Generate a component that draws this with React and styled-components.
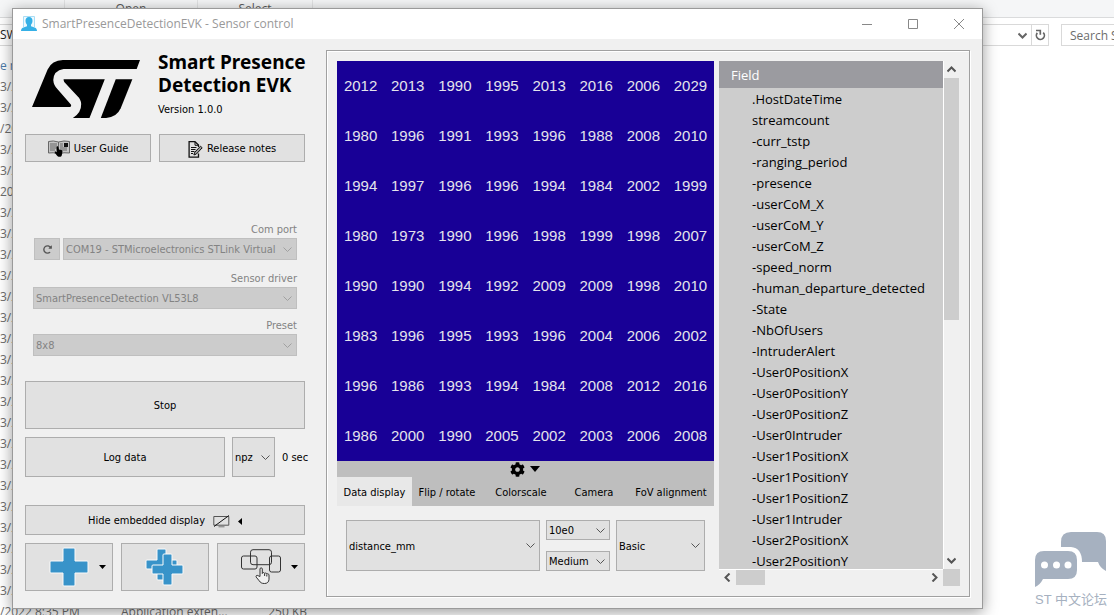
import styled, { createGlobalStyle } from "styled-components";
import { FaRedoAlt, FaCog } from "react-icons/fa";

const GlobalStyle = createGlobalStyle`
    * {
        box-sizing: border-box;
    }
    body {
        margin: 0;
        background: #fff;
        overflow: hidden;
    }
    button,
    select {
        font: inherit;
        color: inherit;
    }
`;

const uiFont = `"Open Sans", "Noto Sans", sans-serif`;
const dialogFont = `"DejaVu Sans Condensed", "Open Sans", sans-serif`;

/* ---------- desktop behind the window ---------- */

const Desktop = styled.div`
    position: relative;
    height: 100vh;
    overflow: hidden;
    display: flex;
    flex-direction: column;
    background: #fff;
    font: 12px/21px ${uiFont};
    color: #6d6d6d;
`;

const Ribbon = styled.div`
    display: grid;
    grid-template-columns: 65px 133px 115px 1fr;
    flex: none;
    height: 18px;
    background: #f5f6f7;
    border-bottom: 1px solid #dadbdc;
`;

const RibbonGroup = styled.div`
    border-right: 1px solid #e2e3e4;
    text-align: center;
    line-height: 18px;
    color: #5a5a5a;
`;

const AddressRow = styled.div`
    display: flex;
    flex: none;
    gap: 12px;
    height: 32px;
    padding: 6px 0 4px;
`;

const AddressBar = styled.div`
    flex: 1;
    display: flex;
    border: 1px solid #d9d9d9;
    border-left: none;
    color: #222;
    line-height: 20px;
`;

const AddressPath = styled.span`
    flex: 1;
`;

const AddressButton = styled.button`
    display: flex;
    align-items: center;
    justify-content: center;
    width: ${(p) => p.$width}px;
    padding: 0;
    border: none;
    border-left: ${(p) => (p.$divided ? "1px solid #d9d9d9" : "none")};
    background: none;
`;

const SearchBox = styled.input`
    width: 53px;
    padding: 0 0 0 8px;
    border: 1px solid #d9d9d9;
    border-right: none;
    font: inherit;
    &::placeholder {
        color: #6d6d6d;
        opacity: 1;
    }
`;

const FileList = styled.div`
    padding-top: 5px;
`;

const FileRow = styled.div`
    display: grid;
    grid-template-columns: 121px 130px 56px;
    height: 21px;
    white-space: nowrap;
    color: ${(p) => (p.$head ? "#4c7ba8" : "#6d6d6d")};
`;

const FileSize = styled.span`
    text-align: right;
`;

const ForumMark = styled.div`
    position: absolute;
    right: 7px;
    bottom: 4px;
    display: flex;
    flex-direction: column;
    align-items: center;
    font: 13px/23px "Liberation Sans", "Noto Sans CJK SC", sans-serif;
    color: #a6b1c0;
`;

/* ---------- window ---------- */

const Window = styled.div`
    position: absolute;
    inset: 8px 131px 6px 12px;
    display: flex;
    flex-direction: column;
    border: 1px solid #9a9a9a;
    background: #f0f0f0;
    box-shadow: 0 3px 14px rgba(0, 0, 0, 0.4);
    font: 11px/16px ${dialogFont};
    color: #000;
`;

const TitleBar = styled.header`
    display: flex;
    align-items: center;
    flex: none;
    height: 30px;
    padding-left: 8px;
    gap: 5px;
    background: #fff;
    color: #999;
    font-family: ${uiFont};
    font-size: 12px;
`;

const WindowTitle = styled.span`
    flex: 1;
`;

const Caption = styled.div`
    display: flex;
`;

const CaptionButton = styled.button`
    display: flex;
    align-items: center;
    justify-content: center;
    width: 46px;
    height: 30px;
    padding: 0;
    border: none;
    background: none;
`;

const Body = styled.div`
    display: flex;
    flex: 1;
    min-height: 0;
    gap: 21px;
    padding: 11px 12px 11px 12px;
`;

const Sidebar = styled.aside`
    flex: none;
    width: 280px;
    display: flex;
    flex-direction: column;
`;

const Brand = styled.div`
    display: flex;
    gap: 18px;
    height: 84px;
    padding: 0 0 0 7px;
    svg {
        flex: none;
        margin-top: 10px;
    }
`;

const BrandName = styled.h1`
    margin: 0;
    padding-top: 1px;
    font: bold 19px/23px "Noto Sans", sans-serif;
    white-space: nowrap;
`;

const Version = styled.div`
    padding-top: 5px;
    line-height: 16px;
`;

const Button = styled.button`
    display: flex;
    align-items: center;
    justify-content: center;
    gap: ${(p) => p.$gap || 4}px;
    flex: ${(p) => p.$flex || "none"};
    height: ${(p) => p.$height}px;
    padding: 2px 0 0;
    border: 1px solid #adadad;
    background: #e1e1e1;
    &:disabled {
        width: 26px;
        border-color: #bfbfbf;
        background: #ccc;
        color: #555;
    }
`;

const IconButton = styled(Button)`
    padding: 0;
`;

const MenuButton = styled(IconButton)`
    display: grid;
    grid-template-columns: 1fr 40px 1fr;
    justify-items: center;
    svg:first-child {
        grid-column: 2;
    }
`;

const ButtonRow = styled.div`
    display: flex;
    gap: ${(p) => p.$gap || 8}px;
`;

const Settings = styled.div`
    display: flex;
    flex-direction: column;
    padding: 59px 8px 25px 8px;
    color: #838383;
`;

const Setting = styled.div`
    display: flex;
    flex-direction: column;
    height: ${(p) => p.$height}px;
`;

const SettingLabel = styled.label`
    text-align: right;
    height: 17px;
    line-height: 18px;
`;

const SettingRow = styled.div`
    display: flex;
    gap: 3px;
    padding-left: 1px;
`;

const SelectBox = styled.div`
    display: grid;
    align-items: center;
    flex: ${(p) => p.$flex || "none"};
    width: ${(p) => (p.$width ? p.$width + "px" : "auto")};
    min-width: 0;
    height: ${(p) => p.$height}px;
    border: 1px solid ${(p) => (p.$disabled ? "#bfbfbf" : "#adadad")};
    background: ${(p) => (p.$disabled ? "#ccc" : "#e1e1e1")};
    select,
    svg {
        grid-area: 1 / 1;
    }
    svg {
        justify-self: end;
        margin-right: 4px;
        pointer-events: none;
    }
`;

const Select = styled.select`
    appearance: none;
    width: 100%;
    height: 100%;
    padding: 2px 18px 0 2px;
    border: none;
    background: none;
    &:disabled {
        color: #838383;
        opacity: 1;
    }
`;

const Stack = styled.div`
    display: flex;
    flex-direction: column;
    gap: 8px;
`;

const LogTime = styled.span`
    align-self: center;
    flex: none;
    width: 23px;
    padding-top: 2px;
    white-space: nowrap;
`;

const Tools = styled(Stack)`
    padding-top: 28px;
`;

/* ---------- data panel ---------- */

const Panel = styled.main`
    flex: 1;
    min-width: 0;
    display: flex;
    gap: 5px;
    padding: 10px 9px 10px 10px;
    border: 1px solid #a0a0a0;
    box-shadow: inset 1px 1px #fff, 1px 1px #fff;
`;

const Display = styled.section`
    flex: 1;
    min-width: 0;
    display: flex;
    flex-direction: column;
`;

const HeatMap = styled.div`
    display: grid;
    grid-template-columns: repeat(8, 1fr);
    grid-auto-rows: 50px;
    background: #180096;
    color: #e4e4ec;
    font: 15px/50px "Liberation Sans", sans-serif;
    text-align: center;
`;

const GearBar = styled.button`
    display: flex;
    align-items: center;
    justify-content: center;
    gap: 5px;
    height: 16px;
    padding: 0 2px 0 0;
    border: none;
    background: #bebebe;
`;

const Tabs = styled.div`
    display: grid;
    grid-template-columns: 75fr 70fr 78fr 68fr 86fr;
    height: 29px;
    background: #bebebe;
`;

const Tab = styled.button`
    padding: 2px 0 0;
    border: none;
    white-space: nowrap;
    background: ${(p) => (p.$active ? "#e8e8e8" : "none")};
`;

const DisplayOptions = styled.div`
    display: flex;
    gap: 6px;
    padding: 14px 9px;
`;

const ScaleStack = styled.div`
    display: flex;
    flex-direction: column;
    gap: 11px;
`;

const FieldPane = styled.section`
    flex: none;
    width: 241px;
    display: grid;
    grid-template-columns: 1fr 17px;
    grid-template-rows: minmax(0, 1fr) 17px;
`;

const FieldScroll = styled.div`
    overflow: hidden;
    background: #cdcdcd;
`;

const FieldTable = styled.table`
    width: 100%;
    border-collapse: collapse;
    font-family: ${uiFont};
    font-size: 13px;
    th {
        height: 27px;
        padding: 0 0 0 12px;
        text-align: left;
        font-weight: normal;
        color: #fff;
        background: #9b9ba0;
    }
    td {
        height: 21px;
        padding: 2px 0 0 33px;
        line-height: 19px;
        white-space: nowrap;
    }
`;

const ScrollBar = styled.div`
    display: flex;
    flex-direction: ${(p) => (p.$vertical ? "column" : "row")};
    align-items: flex-start;
    border: 0 solid #fff;
    border-width: ${(p) => (p.$vertical ? "0 0 0 1px" : "1px 0 0")};
`;

const ScrollArrow = styled.button`
    display: flex;
    align-items: center;
    justify-content: center;
    width: ${(p) => (p.$vertical ? 15 : 17)}px;
    height: ${(p) => (p.$vertical ? 17 : 15)}px;
    padding: 0;
    border: none;
    background: none;
`;

const Thumb = styled.div`
    width: ${(p) => p.$width}px;
    height: ${(p) => p.$height}px;
    background: #cdcdcd;
`;

const Spacer = styled.div`
    flex: 1;
`;

const Corner = styled.div`
    background: #cdcdcd;
`;

/* ---------- drawings ---------- */

function StLogo() {
    return (
        <svg width="108" height="58" viewBox="95 180 325 174" aria-label="ST">
            <path d="M420 180 410 207H190Q160 212 159 240 160 256 172 268L212 314Q215 319 210 321H95L142 208Q155 181 188 180Z" />
            <path d="M190 238H314L268 354H218Q244 338 243 312 242 298 232 289L192 246Q190 242 190 238Z" />
            <path d="M347 238H397L362 325Q350 352 318 354H302Z" />
        </svg>
    );
}

function AppIcon() {
    return (
        <svg width="16" height="16" viewBox="0 0 16 16">
            <path d="M2.500 11V.5h11V11" fill="#eef9fe" stroke="#a8ddf5" />
            <path d="M8 1c2.600 0 3.600 1.700 3.500 4-.1 1.700-.8 2.900-1.500 3.700v1.600l4.300 1.500c1 .5 1.700 1.700 1.700 3.200H0c0-1.500.7-2.700 1.700-3.200L6 10.300V8.700C5.300 7.900 4.600 6.700 4.500 5 4.400 2.700 5.400 1 8 1Z" fill="#35b0e6" />
        </svg>
    );
}

function GuideIcon() {
    return (
        <svg width="22" height="18" viewBox="0 0 22 18">
            <path d="M.5 1.500Q5 .2 10.500 2 16 .2 21.500 1.500V13Q16 12 10.500 14 5 12 .5 13Z" fill="#c4c4c4" stroke="#666" />
            <path d="M10.500 2v11M2 4h7M2 6h7M2 8h6M2 10h5M12 4h3M12 6h3M12 8h7M12 10h7" stroke="#666" />
            <path d="M16 3h4v4h-4z" fill="#111" />
            <path d="M9 6.500c.8-.4 1.300 0 1.400.8l.5 2.200 2.400.6c1 .3 1.300 1 1.100 1.900l-.6 3.300c-.3 1-1 1.500-2.200 1.500-1.400 0-2-.5-2.700-1.400L6.700 12.500c-.3-.9.4-1.300 1.100-.9l1 .6-.4-4.500c-.1-.5.1-1 .6-1.200Z" />
        </svg>
    );
}

function NotesIcon() {
    return (
        <svg width="15" height="17" viewBox="0 0 15 17" fill="none" stroke="#111">
            <path d="M10.500 6V4L7 .7H1.100v15.400h9.400V12.500" strokeWidth="1.300" />
            <path d="M7 1v3.300h3.500M3 6.500h5.500M3 8.500h4.500M3 10.500h3.500M3 12.500h2" />
            <path d="M12.500 5.200l1.700 1.600-5.800 6.200-2.500 1 .8-2.700Z" fill="#999" />
        </svg>
    );
}

function MonitorIcon() {
    return (
        <svg width="17" height="13" viewBox="0 0 17 13" fill="none" stroke="#555">
            <path d="M.8 1.500h15v8.700h-15z" />
            <path d="M5.500 11.800h6" stroke="#777" />
            <path d="M1 11.500 16 .5" stroke="#111" />
        </svg>
    );
}

function PlusIcon() {
    return (
        <svg width="40" height="40" viewBox="0 0 40 40">
            <path d="M15 1h10q1 0 1 1v12h12q1 0 1 1v10q0 1-1 1H26v12q0 1-1 1H15q-1 0-1-1V26H2q-1 0-1-1V15q0-1 1-1h12V2q0-1 1-1Z" fill="#3893c9" stroke="#fafafa" />
        </svg>
    );
}

function MultiPlusIcon() {
    const cross = "M13 1h7q1 0 1 1v10h10q1 0 1 1v7q0 1-1 1H21v10q0 1-1 1h-7q-1 0-1-1V21H2q-1 0-1-1v-7q0-1 1-1h10V2q0-1 1-1Z";
    return (
        <svg width="40" height="40" viewBox="0 0 40 40" fill="#3893c9" stroke="#fafafa">
            <path d={cross} transform="translate(0 1)" />
            <path d={cross} transform="translate(6 6)" />
        </svg>
    );
}

function LayoutIcon() {
    return (
        <svg width="40" height="36" viewBox="0 0 40 36" fill="none" stroke="#333">
            <rect x="9.500" y=".7" width="21" height="15" rx="2.500" />
            <rect x=".5" y="7" width="15.500" height="13" rx="2" />
            <rect x="28.500" y="7" width="11" height="16" rx="2" />
            <path d="M19 27.500V20c0-1.600 2.200-1.600 2.300 0v4.500c.2-1.400 2.200-1.200 2.300.1 .4-1 2.100-.8 2.200.5 .6-.7 2.100-.3 2.200.9v4.300c-.1 2.700-1.800 4.200-4.500 4.200-3 0-4-.9-5.300-2.700l-3-3.700c-.8-1.400.8-2.300 1.900-1.400Z" fill="#f0f0f0" />
            <path d="M23.600 25v2M25.800 25.500v2" />
        </svg>
    );
}

function Triangle({ left, width = 7, height = 4 }) {
    return left ? (
        <svg width="4" height="7" viewBox="0 0 4 7">
            <path d="M4 0v7L0 3.500Z" />
        </svg>
    ) : (
        <svg width={width} height={height} viewBox="0 0 8 4" preserveAspectRatio="none">
            <path d="M0 0h8L4 4Z" />
        </svg>
    );
}

function Chevron({ color = "#555", weight = 1, rotate = 0, size = 9 }) {
    return (
        <svg width={size} height={size} viewBox="0 0 9 9" fill="none" stroke={color} strokeWidth={weight}>
            <path d="M.5 2.500l4 4 4-4" transform={`rotate(${rotate} 4.500 4.500)`} />
        </svg>
    );
}

function Dropdown({ label, id, value, disabled, ...box }) {
    return (
        <SelectBox $disabled={disabled} {...box}>
            <Select id={id} aria-label={label} disabled={disabled} defaultValue={value}>
                <option>{value}</option>
            </Select>
            <Chevron color={disabled ? "#a0a0a0" : "#555"} />
        </SelectBox>
    );
}

/* ---------- data ---------- */

const distances = [
    2012, 2013, 1990, 1995, 2013, 2016, 2006, 2029,
    1980, 1996, 1991, 1993, 1996, 1988, 2008, 2010,
    1994, 1997, 1996, 1996, 1994, 1984, 2002, 1999,
    1980, 1973, 1990, 1996, 1998, 1999, 1998, 2007,
    1990, 1990, 1994, 1992, 2009, 2009, 1998, 2010,
    1983, 1996, 1995, 1993, 1996, 2004, 2006, 2002,
    1996, 1986, 1993, 1994, 1984, 2008, 2012, 2016,
    1986, 2000, 1990, 2005, 2002, 2003, 2006, 2008,
];

const fields = [
    ".HostDateTime",
    "streamcount",
    "-curr_tstp",
    "-ranging_period",
    "-presence",
    "-userCoM_X",
    "-userCoM_Y",
    "-userCoM_Z",
    "-speed_norm",
    "-human_departure_detected",
    "-State",
    "-NbOfUsers",
    "-IntruderAlert",
    "-User0PositionX",
    "-User0PositionY",
    "-User0PositionZ",
    "-User0Intruder",
    "-User1PositionX",
    "-User1PositionY",
    "-User1PositionZ",
    "-User1Intruder",
    "-User2PositionX",
    "-User2PositionY",
];

const tabs = ["Data display", "Flip / rotate", "Colorscale", "Camera", "FoV alignment"];

const fileDates = Array.from({ length: 25 }, (_, i) => (i === 2 ? "/20" : i === 5 ? "202" : "3/2"));

function Explorer() {
    return (
        <>
            <Ribbon>
                <RibbonGroup />
                <RibbonGroup>Open</RibbonGroup>
                <RibbonGroup>Select</RibbonGroup>
            </Ribbon>
            <AddressRow>
                <AddressBar>
                    <AddressPath>SW</AddressPath>
                    <AddressButton $width={17} aria-label="Previous locations">
                        <Chevron color="#666" weight={2} />
                    </AddressButton>
                    <AddressButton $width={17} $divided aria-label="Refresh">
                        <svg width="11" height="12" viewBox="0 0 11 12" fill="none" stroke="#666" strokeWidth="1.700">
                            <path d="M8.200 3.600A4 4 0 1 1 2.300 3.900" />
                            <path d="M1 1.500h4.300v4.200" />
                        </svg>
                    </AddressButton>
                </AddressBar>
                <SearchBox placeholder="Search S" aria-label="Search" />
            </AddressRow>
            <FileList>
                <FileRow $head>e m</FileRow>
                {fileDates.map((date, i) => (
                    <FileRow key={i}>{date}</FileRow>
                ))}
                <FileRow>
                    <span>/2022 8:35 PM</span>
                    <span>Application exten...</span>
                    <FileSize>250 KB</FileSize>
                </FileRow>
            </FileList>
            <ForumMark>
                <svg width="72" height="56" viewBox="0 0 72 56" fill="#a6b1c0">
                    <path d="M26 15V10Q26 0 36 0H62Q71 0 71 9V39Q65 36 63 30H47Q47 16 36 15Z" />
                    <path d="M9 19H33Q42 19 42 28V38Q42 47 33 47H8Q5 53 0 55V28Q0 19 9 19Z" />
                    <g fill="#fff">
                        <circle cx="9.500" cy="33" r="3.500" />
                        <circle cx="21.500" cy="33" r="3.500" />
                        <circle cx="33" cy="33" r="3.500" />
                    </g>
                </svg>
                <span>ST 中文论坛</span>
            </ForumMark>
        </>
    );
}

function Controls() {
    return (
        <Sidebar>
            <Brand>
                <StLogo />
                <div>
                    <BrandName>
                        Smart Presence
                        <br />
                        Detection EVK
                    </BrandName>
                    <Version>Version 1.0.0</Version>
                </div>
            </Brand>
            <ButtonRow>
                <Button $height={28} $flex="126">
                    <GuideIcon />
                    User Guide
                </Button>
                <Button $height={28} $flex="146">
                    <NotesIcon />
                    Release notes
                </Button>
            </ButtonRow>
            <Settings>
                <Setting $height={49}>
                    <SettingLabel htmlFor="com">Com port</SettingLabel>
                    <SettingRow>
                        <IconButton $height={22} disabled aria-label="Refresh ports">
                            <FaRedoAlt size={9} />
                        </IconButton>
                        <Dropdown id="com" value="COM19 - STMicroelectronics STLink Virtual COM" disabled $flex="1" $height={22} />
                    </SettingRow>
                </Setting>
                <Setting $height={47}>
                    <SettingLabel htmlFor="driver">Sensor driver</SettingLabel>
                    <Dropdown id="driver" value="SmartPresenceDetection VL53L8" disabled $height={22} />
                </Setting>
                <Setting $height={39}>
                    <SettingLabel htmlFor="preset">Preset</SettingLabel>
                    <Dropdown id="preset" value="8x8" disabled $height={22} />
                </Setting>
            </Settings>
            <Stack>
                <Button $height={48}>Stop</Button>
                <ButtonRow $gap={7}>
                    <Button $height={40} $flex="1">Log data</Button>
                    <Dropdown label="Log format" value="npz" $width={43} $height={40} />
                    <LogTime>0 sec</LogTime>
                </ButtonRow>
            </Stack>
            <Tools>
                <Button $height={30} $gap={8}>
                    Hide embedded display
                    <MonitorIcon />
                    <Triangle left />
                </Button>
                <ButtonRow>
                    <MenuButton $height={48} $flex="1" aria-label="Add view">
                        <PlusIcon />
                        <Triangle />
                    </MenuButton>
                    <IconButton $height={48} $flex="1" aria-label="Add views">
                        <MultiPlusIcon />
                    </IconButton>
                    <MenuButton $height={48} $flex="1" aria-label="Choose layout">
                        <LayoutIcon />
                        <Triangle />
                    </MenuButton>
                </ButtonRow>
            </Tools>
        </Sidebar>
    );
}

function DataPanel() {
    return (
        <Panel>
            <Display>
                <HeatMap>
                    {distances.map((value, i) => (
                        <span key={i}>{value}</span>
                    ))}
                </HeatMap>
                <GearBar aria-label="Display settings">
                    <FaCog size={15} />
                    <Triangle width={10} height={6} />
                </GearBar>
                <Tabs role="tablist">
                    {tabs.map((tab, i) => (
                        <Tab key={tab} role="tab" aria-selected={i === 0} $active={i === 0}>
                            {tab}
                        </Tab>
                    ))}
                </Tabs>
                <DisplayOptions>
                    <Dropdown label="Data" value="distance_mm" $flex="1" $height={51} />
                    <ScaleStack>
                        <Dropdown label="Scale" value="10e0" $width={64} $height={20} />
                        <Dropdown label="Size" value="Medium" $width={64} $height={20} />
                    </ScaleStack>
                    <Dropdown label="Mode" value="Basic" $width={89} $height={51} />
                </DisplayOptions>
            </Display>
            <FieldPane>
                <FieldScroll>
                    <FieldTable>
                        <thead>
                            <tr>
                                <th>Field</th>
                            </tr>
                        </thead>
                        <tbody>
                            {fields.map((field) => (
                                <tr key={field}>
                                    <td>{field}</td>
                                </tr>
                            ))}
                        </tbody>
                    </FieldTable>
                </FieldScroll>
                <ScrollBar $vertical>
                    <ScrollArrow $vertical aria-label="Scroll up">
                        <Chevron rotate={180} weight={2} />
                    </ScrollArrow>
                    <Thumb $width={15} $height={242} />
                    <Spacer />
                    <ScrollArrow $vertical aria-label="Scroll down">
                        <Chevron weight={2} />
                    </ScrollArrow>
                </ScrollBar>
                <ScrollBar>
                    <ScrollArrow aria-label="Scroll left">
                        <Chevron rotate={90} weight={2} />
                    </ScrollArrow>
                    <Thumb $width={29} $height={15} />
                    <Spacer />
                    <ScrollArrow aria-label="Scroll right">
                        <Chevron rotate={-90} weight={2} />
                    </ScrollArrow>
                </ScrollBar>
                <Corner />
            </FieldPane>
        </Panel>
    );
}

export default function App() {
    return (
        <Desktop>
            <GlobalStyle />
            <Explorer />
            <Window>
                <TitleBar>
                    <AppIcon />
                    <WindowTitle>SmartPresenceDetectionEVK - Sensor control</WindowTitle>
                    <Caption>
                        <CaptionButton aria-label="Minimize">
                            <svg width="10" height="10" stroke="#888">
                                <path d="M0 5.500h10" />
                            </svg>
                        </CaptionButton>
                        <CaptionButton aria-label="Maximize">
                            <svg width="10" height="10" stroke="#888" fill="none">
                                <path d="M.5.5h9v9h-9z" />
                            </svg>
                        </CaptionButton>
                        <CaptionButton aria-label="Close">
                            <svg width="10" height="10" stroke="#888">
                                <path d="M0 0l10 10M10 0L0 10" />
                            </svg>
                        </CaptionButton>
                    </Caption>
                </TitleBar>
                <Body>
                    <Controls />
                    <DataPanel />
                </Body>
            </Window>
        </Desktop>
    );
}
